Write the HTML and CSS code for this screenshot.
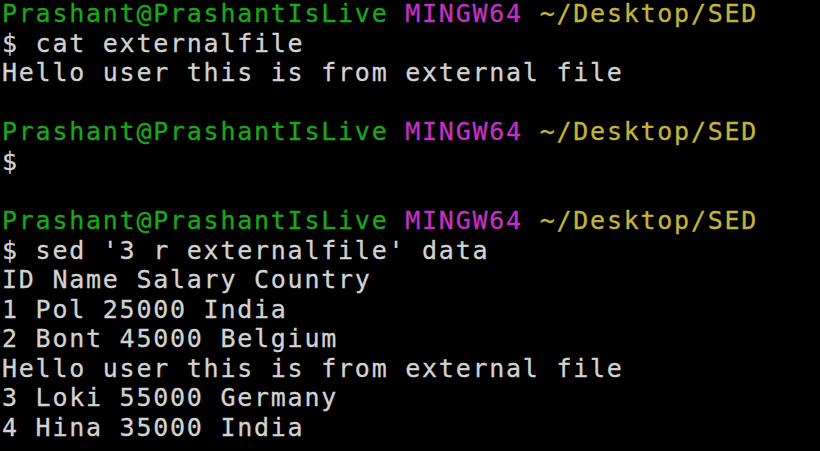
FILE: index.html
```html
<!DOCTYPE html>
<html>
<head>
<meta charset="utf-8">
<link rel="stylesheet" href="styles.css">
</head>
<body>
<div class="term">
<div class="line"><span class="user">Prashant@PrashantIsLive</span> <span class="sys">MINGW64</span> <span class="path">~/Desktop/SED</span></div>
<div class="line">$ cat externalfile</div>
<div class="line">Hello user this is from external file</div>
<div class="line"> </div>
<div class="line"><span class="user">Prashant@PrashantIsLive</span> <span class="sys">MINGW64</span> <span class="path">~/Desktop/SED</span></div>
<div class="line">$</div>
<div class="line"> </div>
<div class="line"><span class="user">Prashant@PrashantIsLive</span> <span class="sys">MINGW64</span> <span class="path">~/Desktop/SED</span></div>
<div class="line">$ sed '3 r externalfile' data</div>
<div class="line">ID Name Salary Country</div>
<div class="line">1 Pol 25000 India</div>
<div class="line">2 Bont 45000 Belgium</div>
<div class="line">Hello user this is from external file</div>
<div class="line">3 Loki 55000 Germany</div>
<div class="line">4 Hina 35000 India</div>
</div>
</body>
</html>
```
FILE: styles.css
```css
html, body {
  margin: 0;
  padding: 0;
  background: #000;
  width: 820px;
  height: 451px;
  overflow: hidden;
}
.term {
  margin-top: -1px;
  padding: 0 0 0 2px;
  font-family: "DejaVu Sans Mono", monospace;
  font-size: 25px;
  letter-spacing: 1.75px;
  line-height: 29.57px;
  color: #d2d2d2;
}
.line {
  height: 29.57px;
  white-space: pre;
  -webkit-text-stroke: 0.3px currentColor;
}
.user { color: #1aa81a; }
.sys { color: #c231c2; }
.path { color: #c3b53a; }
```
